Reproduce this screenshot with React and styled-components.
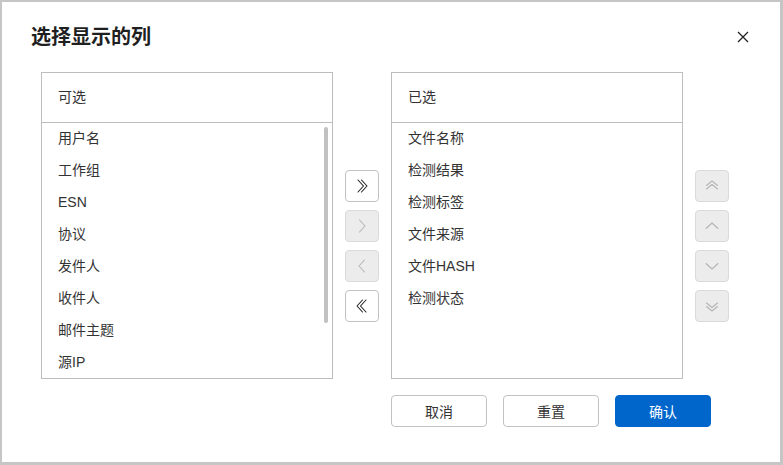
import React from 'react'
import styled, { createGlobalStyle } from 'styled-components'

const GlobalStyle = createGlobalStyle`
  html, body {
    margin: 0;
    padding: 0;
    background: #ffffff;
  }
  body {
    font-family: "Liberation Sans", "Noto Sans CJK SC", sans-serif;
    color: #333333;
  }
  * {
    box-sizing: border-box;
  }
`

const available = ['用户名', '工作组', 'ESN', '协议', '发件人', '收件人', '邮件主题', '源IP']
const selected = ['文件名称', '检测结果', '检测标签', '文件来源', '文件HASH', '检测状态']

const Icon = ({ d }) => (
  <svg width="16" height="16" viewBox="0 0 16 16" fill="none" stroke="currentColor" strokeWidth="1.1" strokeLinecap="round" strokeLinejoin="round">
    <path d={d} />
  </svg>
)

const icons = {
  allRight: 'M4 2 L9.5 8 L4 14 M7.5 2 L13 8 L7.5 14',
  right: 'M5.5 2 L11 8 L5.5 14',
  left: 'M10.5 2 L5 8 L10.5 14',
  allLeft: 'M8.5 2 L3 8 L8.5 14 M12 2 L6.5 8 L12 14',
  top: 'M2.5 7.5 L8 3 L13.5 7.5 M2.5 11 L8 6.5 L13.5 11',
  up: 'M2 10.5 L8 5 L14 10.5',
  down: 'M2 5.5 L8 11 L14 5.5',
  bottom: 'M2.5 5 L8 9.5 L13.5 5 M2.5 8.5 L8 13 L13.5 8.5',
}

const App = () => {
  return <>
    <GlobalStyle />
    <Dialog>
      <Header>
        <Title>选择显示的列</Title>
        <Close aria-label="close">
          <svg width="12" height="12" viewBox="0 0 12 12" stroke="#222" strokeWidth="1.3">
            <path d="M1 1 L11 11 M11 1 L1 11" />
          </svg>
        </Close>
      </Header>
      <Body>
        <Panel>
          <PanelHead>可选</PanelHead>
          <List>
            {available.map(name => <Item key={name}>{name}</Item>)}
            <Thumb />
          </List>
        </Panel>
        <Tools>
          <ToolButton><Icon d={icons.allRight} /></ToolButton>
          <ToolButton disabled><Icon d={icons.right} /></ToolButton>
          <ToolButton disabled><Icon d={icons.left} /></ToolButton>
          <ToolButton><Icon d={icons.allLeft} /></ToolButton>
        </Tools>
        <Panel>
          <PanelHead>已选</PanelHead>
          <List>
            {selected.map(name => <Item key={name}>{name}</Item>)}
          </List>
        </Panel>
        <Tools>
          <ToolButton disabled><Icon d={icons.top} /></ToolButton>
          <ToolButton disabled><Icon d={icons.up} /></ToolButton>
          <ToolButton disabled><Icon d={icons.down} /></ToolButton>
          <ToolButton disabled><Icon d={icons.bottom} /></ToolButton>
        </Tools>
      </Body>
      <Footer>
        <Button>取消</Button>
        <Button>重置</Button>
        <Button primary>确认</Button>
      </Footer>
    </Dialog>
  </>
}

const Dialog = styled.div`
  width: 783px;
  height: 465px;
  border: 2px solid #c6c6c6;
  border-right-width: 3px;
  border-bottom-width: 3px;
  background: #fff;
  display: flex;
  flex-direction: column;
`

const Header = styled.div`
  height: 70px;
  display: flex;
  align-items: center;
  justify-content: space-between;
  padding: 0 31px 0 29px;
`

const Title = styled.h2`
  margin: 0;
  font-size: 20px;
  line-height: 28px;
  font-weight: 700;
  color: #1f1f1f;
`

const Close = styled.button`
  border: 0;
  background: none;
  padding: 0;
  width: 12px;
  height: 12px;
  display: flex;
  cursor: pointer;
`

const Body = styled.div`
  display: flex;
  align-items: flex-start;
  gap: 12px;
  padding-left: 39px;
`

const Panel = styled.div`
  width: 292px;
  height: 307px;
  border: 1px solid #bdbdbd;
  display: flex;
  flex-direction: column;
`

const PanelHead = styled.div`
  height: 50px;
  flex: none;
  border-bottom: 1px solid #bdbdbd;
  padding: 0 0 3px 16px;
  display: flex;
  align-items: center;
  font-size: 14px;
  color: #333;
`

const List = styled.div`
  position: relative;
  flex: 1;
  overflow: hidden;
`

const Item = styled.div`
  height: 32px;
  line-height: 30px;
  padding-left: 16px;
  font-size: 14px;
  color: #333;
`

const Thumb = styled.div`
  position: absolute;
  top: 4px;
  right: 4px;
  width: 4px;
  height: 196px;
  border-radius: 2px;
  background: #c1c1c1;
`

const Tools = styled.div`
  display: flex;
  flex-direction: column;
  gap: 8px;
  margin-top: 98px;
`

const ToolButton = styled.button`
  width: 34px;
  height: 32px;
  padding: 0;
  display: flex;
  align-items: center;
  justify-content: center;
  border-radius: 4px;
  border: 1px solid ${p => (p.disabled ? '#dadada' : '#c2c2c2')};
  background: ${p => (p.disabled ? '#ececec' : '#fff')};
  color: ${p => (p.disabled ? '#b5b5b5' : '#222')};
  cursor: ${p => (p.disabled ? 'not-allowed' : 'pointer')};
`

const Footer = styled.div`
  display: flex;
  gap: 16px;
  padding-left: 389px;
  margin-top: 16px;
`

const Button = styled.button`
  width: 96px;
  height: 32px;
  border-radius: 4px;
  font-family: inherit;
  font-size: 14px;
  border: 1px solid ${p => (p.primary ? '#0066cc' : '#c2c2c2')};
  background: ${p => (p.primary ? '#0066cc' : '#fff')};
  color: ${p => (p.primary ? '#fff' : '#333')};
  cursor: pointer;
`

export default App
